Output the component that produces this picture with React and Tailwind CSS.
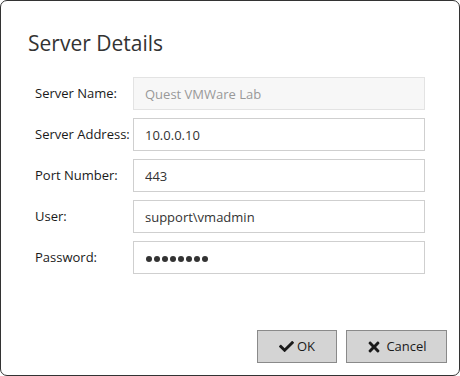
import React from 'react';
import { FaCheck, FaTimes } from 'react-icons/fa';

const fields = [
  { label: 'Server Name:', value: 'Quest VMWare Lab', disabled: true },
  { label: 'Server Address:', value: '10.0.0.10' },
  { label: 'Port Number:', value: '443' },
  { label: 'User:', value: 'support\\vmadmin' },
];

const App = () => {
  return (
    <div className="w-[460px] h-[376px] bg-white font-['Open_Sans',sans-serif]">
      <div className="w-full h-full flex flex-col border border-[#333] rounded-[7px] bg-white">
        <h1 className="pt-[27px] pl-[27px] text-[21px] leading-[30px] text-[#333]">Server Details</h1>

        {/* Form */}
        <div className="mt-[19px] pl-[34px] flex flex-col gap-[8px]">
          {fields.map((f) => (
            <div key={f.label} className="flex items-center">
              <label className="w-[98px] text-[13px] text-[#1a1a1a]">{f.label}</label>
              <input
                readOnly
                type="text"
                value={f.value}
                className={`w-[292px] h-[33px] px-[11px] text-[13px] outline-none border ${
                  f.disabled
                    ? 'bg-[#f7f7f7] border-[#e3e3e3] text-[#999]'
                    : 'bg-white border-[#cfcfcf] text-[#333]'
                }`}
              />
            </div>
          ))}
          <div className="flex items-center">
            <label className="w-[98px] text-[13px] text-[#1a1a1a]">Password:</label>
            <div className="w-[292px] h-[33px] px-[12px] pt-[2px] flex items-center gap-[2px] bg-white border border-[#cfcfcf]">
              {[0, 1, 2, 3, 4, 5, 6, 7].map((i) => (
                <span key={i} className="w-[6px] h-[6px] rounded-full bg-[#333]" />
              ))}
            </div>
          </div>
        </div>

        {/* Buttons */}
        <div className="mt-auto mb-[12px] mr-[12px] flex justify-end gap-[9px]">
          <button className="w-[80px] h-[33px] flex items-center justify-center gap-[3px] bg-[#d4d4d4] border border-[#8a8a8a] text-[13px] text-[#1a1a1a]">
            <FaCheck size={15} />
            OK
          </button>
          <button className="w-[101px] h-[33px] flex items-center justify-center gap-[4px] bg-[#d4d4d4] border border-[#8a8a8a] text-[13px] text-[#1a1a1a]">
            <FaTimes size={16} />
            Cancel
          </button>
        </div>
      </div>
    </div>
  );
};

export default App;
